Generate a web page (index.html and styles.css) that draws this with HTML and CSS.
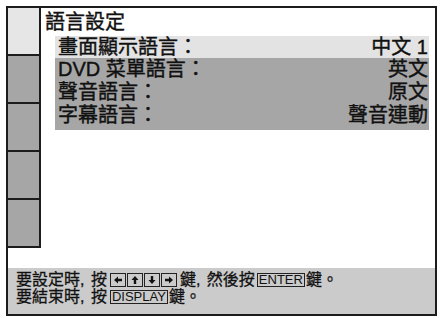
FILE: index.html
```html
<!DOCTYPE html>
<html lang="zh-Hant">
<head>
<meta charset="utf-8">
<link rel="stylesheet" href="styles.css">
</head>
<body>
<div class="screen">
  <div class="top">
    <div class="side">
      <div class="cell light"></div>
      <div class="cell"></div>
      <div class="cell"></div>
      <div class="cell"></div>
      <div class="cell last"></div>
    </div>
    <div class="main">
      <div class="title">語言設定</div>
      <div class="rows">
        <div class="row sel"><span>畫面顯示語言：</span><span>中文 1</span></div>
        <div class="row"><span>DVD 菜單語言：</span><span>英文</span></div>
        <div class="row"><span>聲音語言：</span><span>原文</span></div>
        <div class="row"><span>字幕語言：</span><span>聲音連動</span></div>
      </div>
    </div>
  </div>
  <div class="help">
    <div class="line">要設定時<span class="cm">, </span>按<span class="keys"><span class="key arr"><svg viewBox="0 0 10 10"><path d="M1 5 L5 1.5 L5 3.8 L9 3.8 L9 6.2 L5 6.2 L5 8.5 Z"/></svg></span><span class="key arr"><svg viewBox="0 0 10 10"><path d="M5 1 L8.5 5 L6.2 5 L6.2 9 L3.8 9 L3.8 5 L1.5 5 Z"/></svg></span><span class="key arr"><svg viewBox="0 0 10 10"><path d="M5 9 L8.5 5 L6.2 5 L6.2 1 L3.8 1 L3.8 5 L1.5 5 Z"/></svg></span><span class="key arr"><svg viewBox="0 0 10 10"><path d="M9 5 L5 1.5 L5 3.8 L1 3.8 L1 6.2 L5 6.2 L5 8.5 Z"/></svg></span></span>鍵<span class="cm">, </span>然後按<span class="key txt">ENTER</span>鍵。</div>
    <div class="line">要結束時<span class="cm">, </span>按<span class="key txt disp">DISPLAY</span>鍵。</div>
  </div>
</div>
</body>
</html>
```
FILE: styles.css
```css
html, body {
  margin: 0;
  padding: 0;
  background: #ffffff;
}
body {
  font-family: "Liberation Sans", "Noto Sans CJK TC", sans-serif;
  color: #111;
}
.screen {
  margin: 6px 0 0 6px;
  width: 427px;
  height: 306px;
  border: 2px solid #1c1c1c;
  display: flex;
  flex-direction: column;
  background: #fff;
}
.top {
  flex: 1;
  display: flex;
}
.side {
  width: 31px;
  display: flex;
  flex-direction: column;
  align-self: flex-start;
  border-right: 2px solid #1c1c1c;
  border-bottom: 2px solid #1c1c1c;
}
.cell {
  height: 46px;
  background: #a6a6a6;
  border-bottom: 2px solid #1c1c1c;
}
.cell.last {
  border-bottom: none;
}
.cell.light {
  background: #e6e6e6;
}
.main {
  flex: 1;
  padding: 0 6px 0 0;
}
.title {
  font-size: 20px;
  line-height: 27px;
  padding-left: 4px;
  margin-top: 1px;
  -webkit-text-stroke: 0.4px #111;
}
.rows {
  margin-left: 14px;
  background: #a6a6a6;
  padding-bottom: 3px;
}
.row {
  display: flex;
  justify-content: space-between;
  font-size: 20px;
  line-height: 23px;
  padding: 0 1px 0 3px;
  -webkit-text-stroke: 0.4px #111;
}
.row.sel {
  background: #e3e3e3;
  line-height: 22px;
}
.help {
  height: 46px;
  background: #cbcbcb;
  padding: 3px 0 0 8px;
  box-sizing: border-box;
}
.line {
  font-size: 16px;
  line-height: 17px;
  white-space: nowrap;
  -webkit-text-stroke: 0.3px #111;
}
.cm {
  font-family: "Liberation Sans", sans-serif;
  margin-right: 2px;
}
.keys {
  display: inline-block;
  overflow: hidden;
  height: 14px;
  margin: 0 3px 0 3px;
  vertical-align: -2px;
}
.key {
  display: inline-block;
  overflow: hidden;
  border: 1px solid #222;
  box-sizing: border-box;
  height: 14px;
  vertical-align: -2px;
  -webkit-text-stroke: 0;
}
.keys .key {
  vertical-align: top;
}
.key.arr {
  width: 16px;
  margin-right: 1px;
}
.key.arr:last-child {
  margin-right: 0;
}
.key.arr svg {
  width: 10px;
  height: 10px;
  margin: 1px auto 0;
  fill: #111;
  display: block;
}
.key.txt {
  font-size: 13px;
  padding: 0 1px;
  line-height: 12px;
  font-family: "Liberation Sans", sans-serif;
  margin: 0 1px 0 2px;
}
.key.disp {
  margin-left: 3px;
}
```
